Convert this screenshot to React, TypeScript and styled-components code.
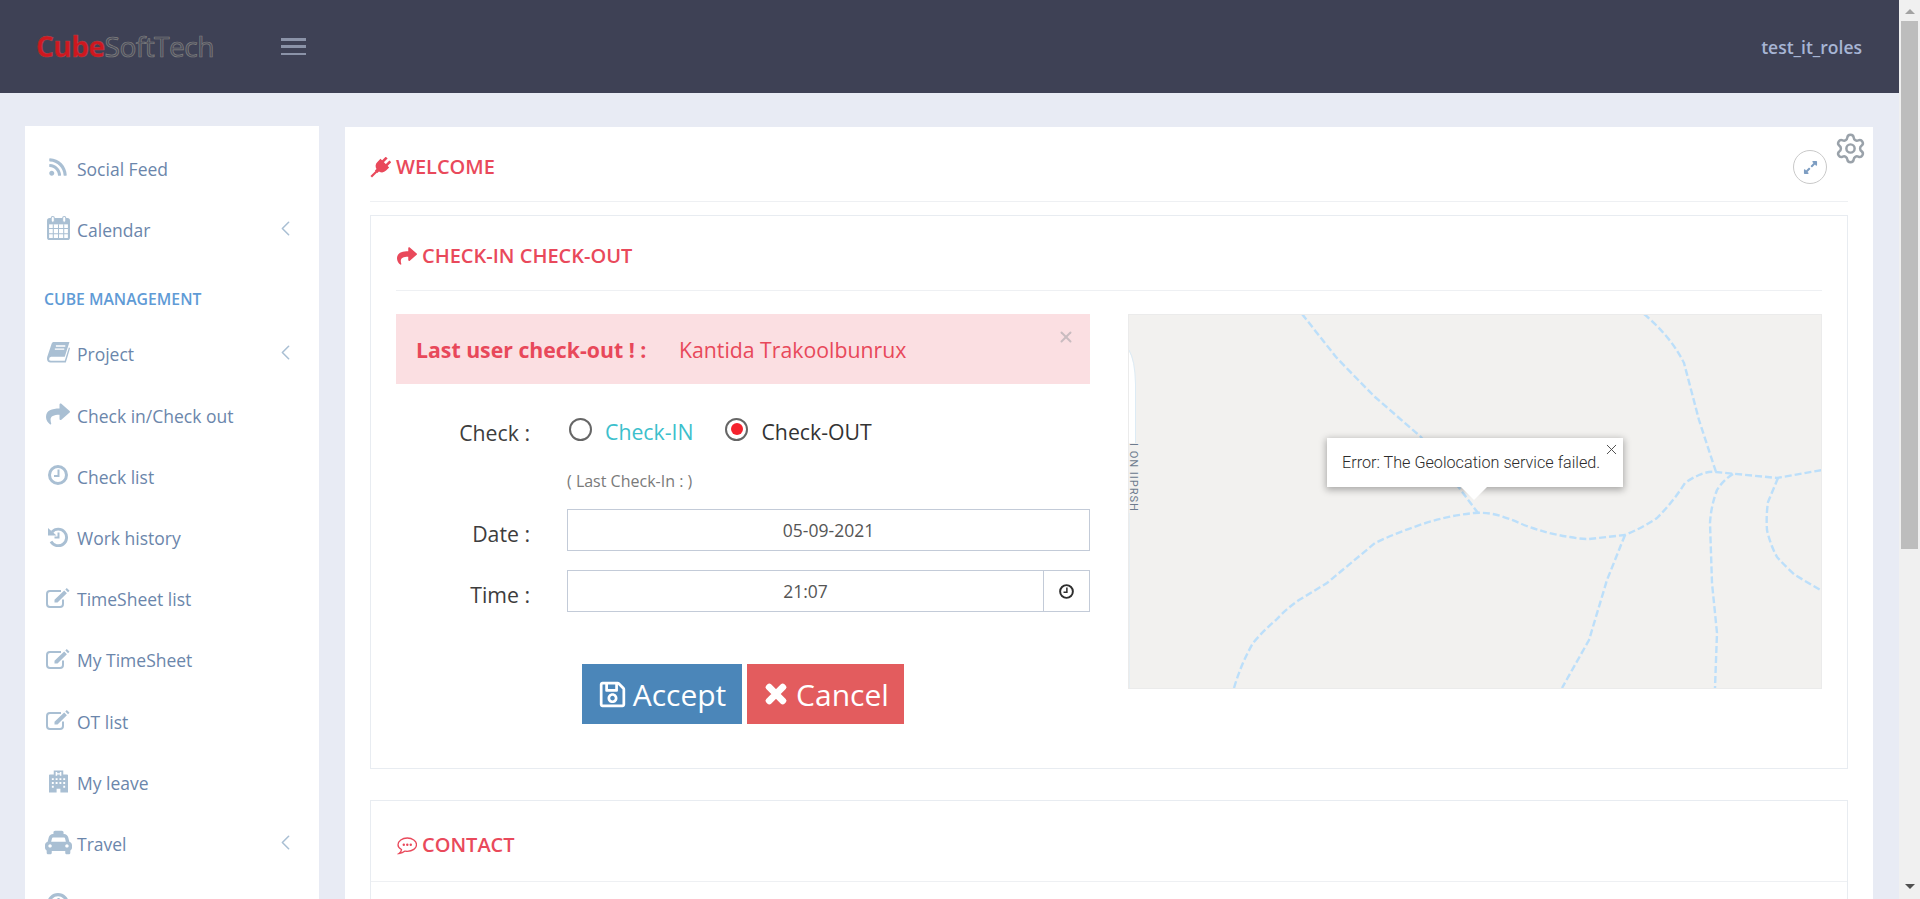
import React from "react";
import styled, { createGlobalStyle } from "styled-components";
import { FaRss, FaShare, FaTaxi, FaRegSave, FaTimes, FaExpandAlt } from "react-icons/fa";
import { ChevronLeft, Settings, X } from "lucide-react";

const GlobalStyle = createGlobalStyle`
  html, body { margin: 0; padding: 0; height: 100%; overflow: hidden; }
  body { font-family: "Open Sans", "Liberation Sans", sans-serif; background: #e8ebf4; }
  * { box-sizing: border-box; }
`;

const Shell = styled.div`
  display: flex;
  height: 899px;
  overflow: hidden;
`;
const Page = styled.div`
  width: 1899px;
  flex: none;
  display: flex;
  flex-direction: column;
  background: #e8ebf4;
`;
const Scrollbar = styled.div`
  width: 21px;
  flex: none;
  background: #f0f0f0;
  display: flex;
  flex-direction: column;
  align-items: center;
`;
const ArrowUp = styled.div`
  width: 0; height: 0; margin-top: 9px;
  border-left: 5px solid transparent; border-right: 5px solid transparent;
  border-bottom: 5px solid #a3a3a3;
`;
const Thumb = styled.div`
  width: 17px; height: 528px; margin-top: 7px; background: #bdbdbd;
`;
const ArrowDown = styled.div`
  width: 0; height: 0; margin-top: auto; margin-bottom: 10px;
  border-left: 5px solid transparent; border-right: 5px solid transparent;
  border-top: 5px solid #505050;
`;

const Header = styled.header`
  height: 93px;
  flex: none;
  background: #3e4155;
  display: flex;
  align-items: center;
  padding: 0 37px 0 36px;
`;
const Logo = styled.div`
  width: 245px;
  font-size: 28.2px;
  letter-spacing: -0.6px;
  line-height: 1;
  color: #4c4e5c;
  -webkit-text-stroke: 0.7px #808080;
`;
const LogoStrong = styled.span`
  font-weight: 700;
  color: #d0171f;
  -webkit-text-stroke: 0.5px #a5474c;
`;
const Burger = styled.div`
  width: 25px;
  height: 17px;
  display: flex;
  flex-direction: column;
  justify-content: space-between;
`;
const BurgerBar = styled.span`
  height: 2.5px;
  background: #8b93a8;
`;
const UserName = styled.div`
  margin-left: auto;
  font-size: 17.5px;
  font-weight: 600;
  color: #a7b5d4;
`;

const Body = styled.div`
  flex: 1;
  min-height: 0;
  display: flex;
  align-items: flex-start;
  gap: 26px;
  padding: 33px 26px 0 25px;
`;
const Sidebar = styled.nav`
  width: 294px;
  flex: none;
  height: 790px;
  background: #fff;
  padding: 12px 0 0 0;
  overflow: hidden;
`;
const MenuRow = styled.div`
  height: 61.2px;
  display: flex;
  align-items: center;
  padding: 0 21px 0 19px;
  color: #6b86ab;
  font-size: 17.5px;
`;
const MenuIcon = styled.span`
  width: 28px;
  margin-right: 5px;
  display: flex;
  justify-content: center;
  margin-top: -3px;
  color: #a9bfd3;
`;
const MenuCaret = styled.span`
  margin-left: auto;
  color: #a9bfd3;
  display: flex;
  margin-top: -3px;
`;
const MenuHeading = styled.div`
  height: 63.5px;
  padding: 14px 0 0 19px;
  display: flex;
  align-items: center;
  color: #5f9bd6;
  font-size: 15.75px;
  font-weight: 600;
`;
const Panel = styled.main`
  position: relative;
  width: 1528px;
  margin-top: 1px;
  flex: none;
  height: 772px;
  background: #fff;
  padding: 0 25px;
  overflow: hidden;
`;
const PanelHead = styled.div`
  height: 75px;
  border-bottom: 1px solid #eef0f3;
  display: flex;
  align-items: center;
  padding-top: 6px;
`;
const Title = styled.h2`
  margin: 0;
  font-size: 20px;
  font-weight: 600;
  line-height: 24px;
  color: #e9495b;
  display: flex;
  align-items: center;
  gap: 5px;
`;
const TitleIcon = styled.span`
  display: flex;
  width: 21px;
  justify-content: center;
`;
const ExpandButton = styled.div`
  position: absolute;
  right: 46px;
  top: 23px;
  width: 34px;
  height: 34px;
  border: 1px solid #c9c9c9;
  border-radius: 50%;
  display: flex;
  align-items: center;
  justify-content: center;
  color: #7d9dc2;
  font-size: 15px;
`;
const GearButton = styled.div`
  position: absolute;
  right: 6px;
  top: 5px;
  color: #9aa2aa;
  display: flex;
`;
const Card = styled.section<{ $top: number; $flush?: boolean }>`
  border: 1px solid #e8ecf1;
  margin-top: ${(p) => p.$top}px;
  padding: 0 ${(p) => (p.$flush ? 0 : 25)}px;
`;
const CardHead = styled.div<{ $h?: number; $inset?: boolean }>`
  height: ${(p) => p.$h ?? 75}px;
  border-bottom: 1px solid #eef0f3;
  display: flex;
  align-items: center;
  padding: ${(p) => (p.$inset ? 8 : 6)}px 0 0 ${(p) => (p.$inset ? 25 : 0)}px;
`;
const Columns = styled.div`
  display: flex;
  gap: 38px;
  padding: 23px 0 44px;
`;
const FormColumn = styled.div`
  width: 694px;
  flex: none;
`;
const Alert = styled.div`
  position: relative;
  height: 70px;
  background: #fbdfe2;
  color: #e8485a;
  display: flex;
  align-items: center;
  padding-left: 20px;
  font-size: 21.25px;
`;
const AlertStrong = styled.strong`
  font-weight: 700;
  width: 263px;
  flex: none;
`;
const AlertName = styled.span`
  font-weight: 400;
`;
const AlertClose = styled.span`
  position: absolute;
  right: 15px;
  top: 14px;
  color: #c9bcc0;
  display: flex;
`;
const FormRow = styled.div<{ $top: number }>`
  display: grid;
  grid-template-columns: 134px 1fr;
  column-gap: 37px;
  align-items: center;
  margin-top: ${(p) => p.$top}px;
`;
const Label = styled.label<{ $shift?: number }>`
  text-align: right;
  font-size: 21.25px;
  line-height: 24px;
  color: #3d3d3d;
  padding-top: ${(p) => p.$shift ?? 0}px;
`;
const Radios = styled.div`
  display: flex;
  align-items: center;
  height: 36px;
`;
const RadioDot = styled.span<{ $on?: boolean }>`
  width: 23px;
  height: 23px;
  flex: none;
  margin: -4px 0 0 ${(p) => (p.$on ? 0 : 2)}px;
  border-radius: 50%;
  border: 2px solid #666;
  display: flex;
  align-items: center;
  justify-content: center;
  &::after {
    content: "";
    width: 12px;
    height: 12px;
    border-radius: 50%;
    background: ${(p) => (p.$on ? "#f5222d" : "transparent")};
  }
`;
const RadioLabel = styled.span<{ $tone: string }>`
  font-size: 21.25px;
  line-height: 24px;
  margin: 2px 32px 0 13px;
  color: ${(p) => p.$tone};
`;
const Hint = styled.div`
  grid-column: 2;
  font-size: 16px;
  line-height: 24px;
  color: #7a7a7a;
`;
const Input = styled.div`
  display: flex;
  height: 42px;
  border: 1px solid #c3cbd8;
  font-size: 17.5px;
  color: #555;
`;
const InputValue = styled.div`
  flex: 1;
  display: flex;
  align-items: center;
  justify-content: center;
`;
const InputAddon = styled.div`
  width: 46px;
  flex: none;
  border-left: 1px solid #c3cbd8;
  display: flex;
  align-items: center;
  justify-content: center;
  color: #2e2e2e;
`;
const Actions = styled.div`
  display: flex;
  gap: 5px;
  margin-top: 52px;
  padding-left: 186px;
`;
const Button = styled.button<{ $bg: string; $w: number }>`
  width: ${(p) => p.$w}px;
  height: 60px;
  border: 0;
  padding: 0;
  background: ${(p) => p.$bg};
  color: #fff;
  font-family: inherit;
  font-size: 30px;
  display: flex;
  align-items: center;
  justify-content: center;
  gap: 6px;
`;
const MapBox = styled.div`
  position: relative;
  width: 694px;
  height: 375px;
  flex: none;
  background: #f2f1ef;
  border: 1px solid #ebebeb;
  overflow: hidden;
`;
const MapDrawing = styled.svg`
  display: block;
  width: 694px;
  height: 375px;
  margin: -1px;
`;
const InfoWindow = styled.div`
  position: absolute;
  left: 198px;
  top: 123px;
  width: 296px;
  height: 49px;
  background: #fff;
  box-shadow: 0 2px 7px 1px rgba(0, 0, 0, 0.3);
  padding: 15px 0 0 15px;
  font-family: Roboto, "Open Sans", sans-serif;
  font-size: 16.2px;
  font-weight: 300;
  line-height: 20px;
  color: #2c2c2c;
  &::after {
    content: "";
    position: absolute;
    left: 134px;
    top: 49px;
    border-left: 13px solid transparent;
    border-right: 13px solid transparent;
    border-top: 13px solid #fff;
  }
`;
const InfoClose = styled.span`
  position: absolute;
  right: 3px;
  top: 3px;
  display: flex;
  color: #444;
`;
const ContactBody = styled.div`
  height: 60px;
`;

const Hospital = () => (
  <svg width="19" height="23" viewBox="0 0 20 23" fill="currentColor" aria-hidden="true">
    <path fillRule="evenodd" d="M5 0h10v4h4a1 1 0 0 1 1 1v18H12v-4H8v4H0V5a1 1 0 0 1 1-1h4zM7 1.500v4h1.600V4.200h2.800v1.300H13v-4h-1.600v1.300H8.600V1.500zM3 8v2h2V8zM7 8v2h2V8zM11 8v2h2V8zM15 8v2h2V8zM3 12v2h2v-2zM7 12v2h2v-2zM11 12v2h2v-2zM15 12v2h2v-2zM3 16v2h2v-2zM15 16v2h2v-2z" />
  </svg>
);
const Calendar = () => (
  <svg width="23" height="24" viewBox="0 0 22 23" fill="none" stroke="currentColor" aria-hidden="true">
    <rect x="1" y="3" width="20" height="19" rx="1.500" strokeWidth="2" />
    <path d="M1 5.500H21" strokeWidth="5" />
    <path d="M6 8V22M11 8V22M16 8V22M1 12H21M1 17H21" strokeWidth="1" />
    <rect x="4" y="0.500" width="3" height="5.500" rx="1.500" fill="#fff" strokeWidth="1" />
    <rect x="15" y="0.500" width="3" height="5.500" rx="1.500" fill="#fff" strokeWidth="1" />
  </svg>
);
const Book = () => (
  <svg width="23" height="21" viewBox="0 0 22 20" fill="currentColor" aria-hidden="true">
    <path d="M6 0H21.500L17 14H4Q2 14 2 16.500 2 18 4 18H17L21 5L22 6L18 19.500H3.500Q0 19.500 0 16Q0 14.500 1 12L4.500 1.500Q5 0 6 0Z" />
    <path d="M8.500 3.800H17.500M7.500 6.800H16.500" stroke="#fff" strokeWidth="1.300" />
  </svg>
);
const Clock = ({ size, weight = 3 }: { size: number; weight?: number }) => (
  <svg width={size} height={size} viewBox="0 0 20 20" fill="none" stroke="currentColor" aria-hidden="true">
    <circle cx="10" cy="10" r="8.500" strokeWidth={weight} />
    <path d="M10.500 4.500V11H6" strokeWidth="2" />
  </svg>
);
const History = () => (
  <svg width="20" height="20" viewBox="0 0 20 20" fill="none" stroke="currentColor" aria-hidden="true">
    <path d="M4 5A8.300 8.300 0 1 1 3 14.500" strokeWidth="2.900" />
    <path d="M0 1L8.500 8.500H0Z" fill="currentColor" stroke="none" />
    <path d="M10.500 5.500V10.500H6.500" strokeWidth="2" />
  </svg>
);
const EditSquare = () => (
  <svg width="24" height="20" viewBox="0 0 24 20" fill="none" stroke="currentColor" aria-hidden="true">
    <path d="M17 11.500V16a3 3 0 0 1-3 3H4a3 3 0 0 1-3-3V6a3 3 0 0 1 3-3h11" strokeWidth="2" />
    <path d="M20.800 0L23.500 2.700 22 4.200 19.300 1.500ZM18.200 2.600L20.900 5.300 11.500 14.500H8.500V11.800Z" fill="currentColor" stroke="none" />
  </svg>
);
const Plug = () => (
  <svg width="21" height="21" viewBox="-2 -2 24 24" fill="currentColor" aria-hidden="true">
    <g transform="rotate(45 10 10)">
      <rect x="5.500" y="-3" width="3" height="7" />
      <rect x="11.500" y="-3" width="3" height="7" />
      <path d="M3 3H17V8Q17 13 12 14.500V17H8V14.500Q3 13 3 8Z" />
      <path d="M10 16V25" stroke="currentColor" strokeWidth="2.500" />
    </g>
  </svg>
);
const CommentDots = () => (
  <svg width="20" height="19" viewBox="0 0 20 18" fill="none" stroke="currentColor" aria-hidden="true">
    <path d="M4.500 13C2.500 12 1 10.300 1 8.200 1 4.500 5.200 1.500 10.300 1.500S19.500 4.500 19.500 8.200 15.400 14.800 10.300 14.800C9.500 14.800 8.800 14.700 8 14.600 6.500 16 4.500 16.900 2 17 3.500 16 4.500 14.800 4.500 13Z" strokeWidth="1.300" />
    <circle cx="6.800" cy="8.200" r="1.200" fill="currentColor" stroke="none" />
    <circle cx="10.300" cy="8.200" r="1.200" fill="currentColor" stroke="none" />
    <circle cx="13.800" cy="8.200" r="1.200" fill="currentColor" stroke="none" />
  </svg>
);

type Item = [React.ReactNode, string, boolean];
const menuTop: Item[] = [
  [<FaRss size={20} />, "Social Feed", false],
  [<Calendar />, "Calendar", true],
];
const menuMain: Item[] = [
  [<Book />, "Project", true],
  [<FaShare size={24} />, "Check in/Check out", false],
  [<Clock size={20} />, "Check list", false],
  [<History />, "Work history", false],
  [<EditSquare />, "TimeSheet list", false],
  [<EditSquare />, "My TimeSheet", false],
  [<EditSquare />, "OT list", false],
  [<Hospital />, "My leave", false],
  [<FaTaxi size={27} />, "Travel", true],
  [<Clock size={22} />, "", false],
];

const roads = [
  "M174 0L208 43Q228 64 247 83L293 123L350 199",
  "M106 374Q113 350 125 329Q136 316 148 306Q158 295 171 286L199 269L247 229Q266 220 286 213Q316 202 346 199Q360 198 373 202Q385 206 396 211Q420 220 442 223Q452 225 461 225L497 221Q514 214 529 204Q545 188 557 169Q564 164 571 161Q580 157 588 158L649 164L694 156",
  "M516 0Q528 10 539 23Q549 35 556 49L571 106L588 158",
  "M497 221L479 266L461 326L434 374",
  "M605 160Q595 166 589 176Q583 192 582 209L584 269L589 319L587 374",
  "M650 164L640 188Q638 202 639 216Q642 230 649 243Q657 252 667 261L694 277",
];

const MenuItem = ({ item }: { item: Item }) => (
  <MenuRow>
    <MenuIcon>{item[0]}</MenuIcon>
    {item[1]}
    {item[2] && (
      <MenuCaret>
        <ChevronLeft size={25} strokeWidth={1.5} />
      </MenuCaret>
    )}
  </MenuRow>
);

export default function App() {
  return (
    <Shell>
      <GlobalStyle />
      <Page>
        <Header>
          <Logo>
            <LogoStrong>Cube</LogoStrong>SoftTech
          </Logo>
          <Burger>
            <BurgerBar />
            <BurgerBar />
            <BurgerBar />
          </Burger>
          <UserName>test_it_roles</UserName>
        </Header>
        <Body>
          <Sidebar>
            {menuTop.map((m) => (
              <MenuItem key={m[1]} item={m} />
            ))}
            <MenuHeading>CUBE MANAGEMENT</MenuHeading>
            {menuMain.map((m) => (
              <MenuItem key={m[1] || "more"} item={m} />
            ))}
          </Sidebar>
          <Panel>
            <PanelHead>
              <Title>
                <TitleIcon>
                  <Plug />
                </TitleIcon>
                WELCOME
              </Title>
            </PanelHead>
            <ExpandButton>
              <FaExpandAlt />
            </ExpandButton>
            <GearButton>
              <Settings size={33} strokeWidth={1.8} />
            </GearButton>
            <Card $top={13}>
              <CardHead>
                <Title>
                  <TitleIcon>
                    <FaShare size={20} />
                  </TitleIcon>
                  CHECK-IN CHECK-OUT
                </Title>
              </CardHead>
              <Columns>
                <FormColumn>
                  <Alert>
                    <AlertStrong>Last user check-out ! :</AlertStrong>
                    <AlertName>Kantida Trakoolbunrux</AlertName>
                    <AlertClose>
                      <X size={18} strokeWidth={2.6} />
                    </AlertClose>
                  </Alert>
                  <FormRow $top={29}>
                    <Label $shift={4}>Check :</Label>
                    <Radios>
                      <RadioDot />
                      <RadioLabel $tone="#3cc0cc">Check-IN</RadioLabel>
                      <RadioDot $on />
                      <RadioLabel $tone="#333">Check-OUT</RadioLabel>
                    </Radios>
                  </FormRow>
                  <FormRow $top={20}>
                    <Hint>( Last Check-In : )</Hint>
                  </FormRow>
                  <FormRow $top={16}>
                    <Label $shift={7}>Date :</Label>
                    <Input>
                      <InputValue>05-09-2021</InputValue>
                    </Input>
                  </FormRow>
                  <FormRow $top={19}>
                    <Label $shift={7}>Time :</Label>
                    <Input>
                      <InputValue>21:07</InputValue>
                      <InputAddon>
                        <Clock size={15} weight={2.600} />
                      </InputAddon>
                    </Input>
                  </FormRow>
                  <Actions>
                    <Button $bg="#4b86b9" $w={160}>
                      <FaRegSave size={29} />
                      Accept
                    </Button>
                    <Button $bg="#e35c5e" $w={157}>
                      <FaTimes size={28} stroke="currentColor" strokeWidth={30} />
                      Cancel
                    </Button>
                  </Actions>
                </FormColumn>
                <MapBox>
                  <MapDrawing viewBox="0 0 694 375">
                    <path d="M0 36Q7 46 7.500 70V129H0Z" fill="#fff" />
                    <path d="M1 36Q7 46 7.500 70V129M1 199V375" stroke="#dcebf5" strokeWidth="1" fill="none" />
                    <text
                      transform="translate(1.500 129) rotate(90)"
                      fontFamily="Roboto, sans-serif"
                      fontSize="11"
                      letterSpacing="1"
                      fill="#6e7c8e"
                    >
                      I ON IIPRSH
                    </text>
                    {roads.map((d) => (
                      <path key={d} d={d} fill="none" stroke="#bcdffa" strokeWidth="2.400" strokeDasharray="7 3" />
                    ))}
                  </MapDrawing>
                  <InfoWindow>
                    Error: The Geolocation service failed.
                    <InfoClose>
                      <X size={17} strokeWidth={1.3} />
                    </InfoClose>
                  </InfoWindow>
                </MapBox>
              </Columns>
            </Card>
            <Card $top={31} $flush>
              <CardHead $h={81} $inset>
                <Title>
                  <TitleIcon>
                    <CommentDots />
                  </TitleIcon>
                  CONTACT
                </Title>
              </CardHead>
              <ContactBody />
            </Card>
          </Panel>
        </Body>
      </Page>
      <Scrollbar>
        <ArrowUp />
        <Thumb />
        <ArrowDown />
      </Scrollbar>
    </Shell>
  );
}
